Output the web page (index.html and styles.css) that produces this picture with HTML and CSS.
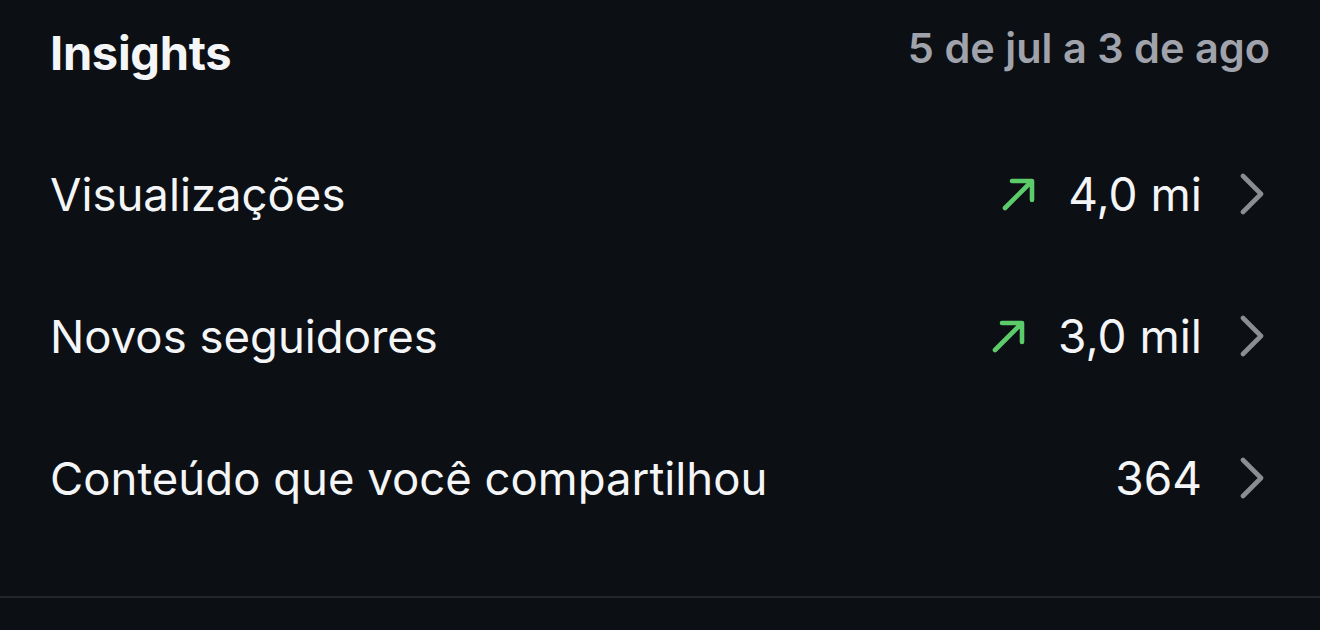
FILE: index.html
```html
<!DOCTYPE html>
<html lang="pt-BR">
<head>
<meta charset="utf-8">
<link rel="stylesheet" href="styles.css">
</head>
<body>
<div class="panel">
  <header class="head">
    <h1 class="title">Insights</h1>
    <span class="range">5 de jul a 3 de ago</span>
  </header>
  <ul class="rows">
    <li class="row">
      <span class="label">Visualizações</span>
      <span class="val">
        <svg class="up" viewBox="0 0 34 34"><path d="M4 31 L30 5 M11 4 H31 V23" fill="none" stroke="#5ccb6a" stroke-width="4.6" stroke-linecap="round" stroke-linejoin="round"/></svg>
        <span class="num">4,0 mi</span>
      </span>
      <svg class="chev" viewBox="0 0 24 42"><path d="M3 3 L21 21 L3 39" fill="none" stroke="#8c8d92" stroke-width="4.6" stroke-linecap="round" stroke-linejoin="round"/></svg>
    </li>
    <li class="row">
      <span class="label">Novos seguidores</span>
      <span class="val">
        <svg class="up" viewBox="0 0 34 34"><path d="M4 31 L30 5 M11 4 H31 V23" fill="none" stroke="#5ccb6a" stroke-width="4.6" stroke-linecap="round" stroke-linejoin="round"/></svg>
        <span class="num">3,0 mil</span>
      </span>
      <svg class="chev" viewBox="0 0 24 42"><path d="M3 3 L21 21 L3 39" fill="none" stroke="#8c8d92" stroke-width="4.6" stroke-linecap="round" stroke-linejoin="round"/></svg>
    </li>
    <li class="row">
      <span class="label">Conteúdo que você compartilhou</span>
      <span class="val">
        <span class="num">364</span>
      </span>
      <svg class="chev" viewBox="0 0 24 42"><path d="M3 3 L21 21 L3 39" fill="none" stroke="#8c8d92" stroke-width="4.6" stroke-linecap="round" stroke-linejoin="round"/></svg>
    </li>
  </ul>
  <div class="divider"></div>
</div>
</body>
</html>
```
FILE: styles.css
```css
html, body {
  margin: 0;
  padding: 0;
  background: #0c0f14;
}
body {
  font-family: Inter, "Noto Sans", sans-serif;
  color: #f4f5f7;
  width: 1320px;
  height: 630px;
  overflow: hidden;
}
.panel {
  display: flex;
  flex-direction: column;
}
.head {
  display: flex;
  justify-content: space-between;
  align-items: center;
  padding: 24px 50px 0 50px;
  height: 56px;
}
.title {
  margin: 0;
  font-size: 47px;
  font-weight: 700;
  letter-spacing: -0.3px;
}
.range {
  font-size: 41.5px;
  font-weight: 600;
  color: #a0a3ab;
  margin-top: -8px;
}
.rows {
  list-style: none;
  margin: 0;
  padding: 0;
  margin-top: 43px;
}
.row {
  display: flex;
  align-items: center;
  height: 142px;
  padding: 0 56px 0 50px;
}
.label {
  flex: 1;
  font-size: 45.5px;
  font-weight: 400;
}
.val {
  display: flex;
  align-items: center;
  gap: 33px;
}
.up {
  width: 34px;
  height: 34px;
}
.num {
  font-size: 46px;
  font-weight: 400;
}
.chev {
  width: 24px;
  height: 42px;
  margin-left: 38px;
}
.divider {
  margin-top: 47px;
  height: 2px;
  background: #222529;
}
```
